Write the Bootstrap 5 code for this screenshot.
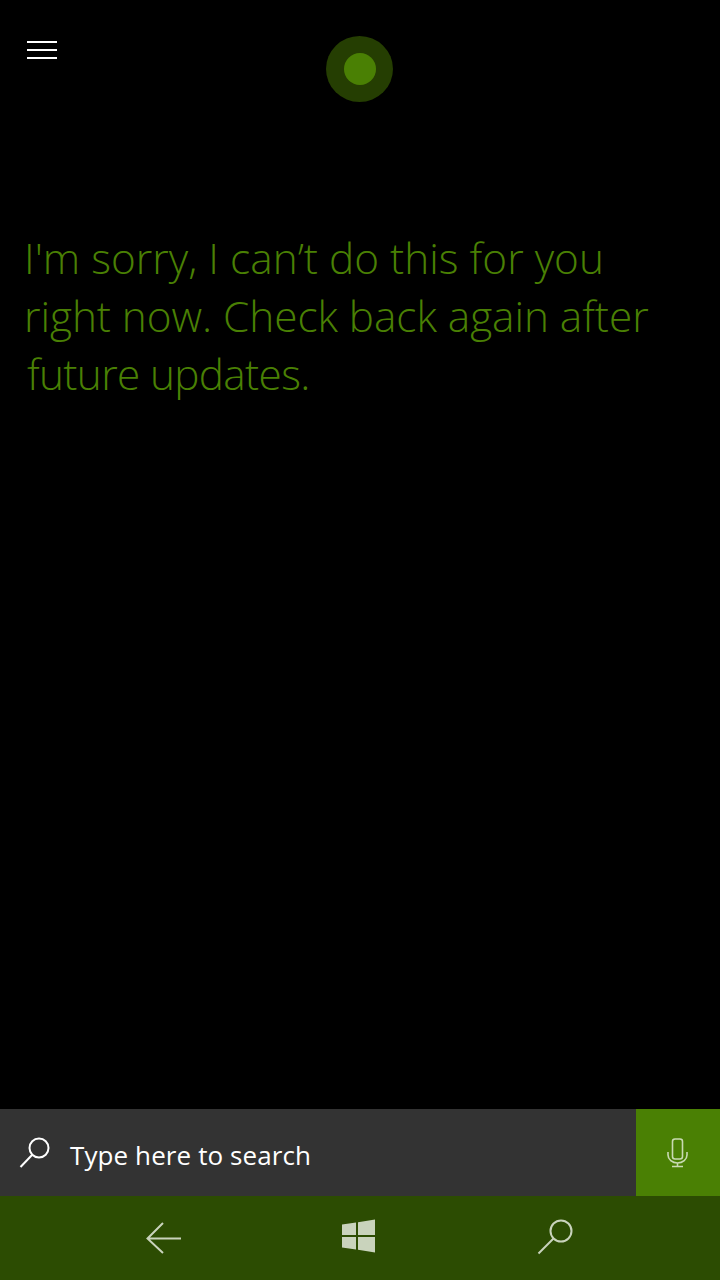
<!DOCTYPE html>
<html lang="en">
<head>
<meta charset="utf-8">
<link href="https://cdn.jsdelivr.net/npm/bootstrap@5.3.0/dist/css/bootstrap.min.css" rel="stylesheet">
<style>
html,body{height:100%;margin:0;background:#000;}
.app-shell{height:1280px;width:720px;background:#000;font-family:"Open Sans","Noto Sans",sans-serif;}
.top-zone{height:229px;}
.menu-btn{background:none;border:0;padding:0;margin:41px 0 0 27px;width:30px;height:18px;flex:none;}
.menu-btn span{display:block;height:2px;background:#fff;margin-bottom:6px;}
.orb{width:67px;height:66px;border-radius:50%;background:#253e02;margin:36px 0 0 269px;flex:none;}
.orb-core{width:32px;height:32px;border-radius:50%;background:#4a8004;}
.reply{color:#4a8004;font-size:42.3px;line-height:58px;font-weight:300;padding-left:25px;margin:0;}
.reply-first{letter-spacing:.03px;margin-left:-1px;}
.reply-mid{letter-spacing:-.04px;margin-left:-1px;}
.reply-last{padding-left:2px;letter-spacing:-.65px;}
.search-zone{height:87px;background:#333;}
.search-icon{margin-left:19px;flex:none;}
.search-label{color:#fff;font-size:26px;margin-left:19px;letter-spacing:.1px;position:relative;top:3px;}
.mic-zone{width:84px;height:87px;background:#4a8004;padding-right:1px;}
.nav-zone{height:84px;background:#2c4c02;}
.nav-back{margin-left:146px;flex:none;}
.nav-win{margin-left:160px;flex:none;position:relative;top:-2px;}
.nav-find{margin-left:161px;flex:none;position:relative;top:-1px;}
</style>
</head>
<body>
<div class="app-shell d-flex flex-column">
<div class="top-zone d-flex align-items-start">
<button class="menu-btn" aria-label="Menu"><span></span><span></span><span></span></button>
<div class="orb d-flex align-items-center justify-content-center"><div class="orb-core"></div></div>
</div>
<p class="reply flex-grow-1"><span class="reply-first">I'm sorry, I can’t do this for you</span><br><span class="reply-mid">right now. Check back again after</span><br><span class="reply-last">future updates.</span></p>
<div class="search-zone d-flex align-items-center">
<svg class="search-icon" width="32" height="32" viewBox="0 0 32 32" fill="none" stroke="#fff" stroke-width="2"><circle cx="20" cy="11" r="9.500"/><path d="M13 18 1.500 30"/></svg>
<span class="search-label flex-grow-1">Type here to search</span>
<div class="mic-zone d-flex align-items-center justify-content-center">
<svg width="21" height="30" viewBox="0 0 21 30" fill="none" stroke="#c9dab3" stroke-width="1.600"><rect x="5.500" y="1" width="10" height="20" rx="2.500"/><path d="M1 14v3a9.500 8 0 0 0 19 0v-3M10.500 25v3M5 28.500h11"/></svg>
</div>
</div>
<div class="nav-zone d-flex align-items-center">
<svg class="nav-back" width="36" height="32" viewBox="0 0 36 32" fill="none" stroke="#c9d3bc" stroke-width="2"><path d="M17 1 1.500 16.500 17 31M2 16.500h33"/></svg>
<svg class="nav-win" width="34" height="34" viewBox="0 0 34 34" fill="#c9d3bc"><path d="M0 5.500 14 3.500V16H0zM16 3.200 33 .5V16H16zM0 18H14V30.500L0 28.500zM16 18H33V33.500L16 30.800z"/></svg>
<svg class="nav-find" width="36" height="36" viewBox="0 0 36 36" fill="none" stroke="#c9d3bc" stroke-width="2"><circle cx="24" cy="12" r="10.500"/><path d="M16.500 19.500 1.500 34.500"/></svg>
</div>
</div>
<script src="https://cdn.jsdelivr.net/npm/bootstrap@5.3.0/dist/js/bootstrap.bundle.min.js"></script>
</body>
</html>
